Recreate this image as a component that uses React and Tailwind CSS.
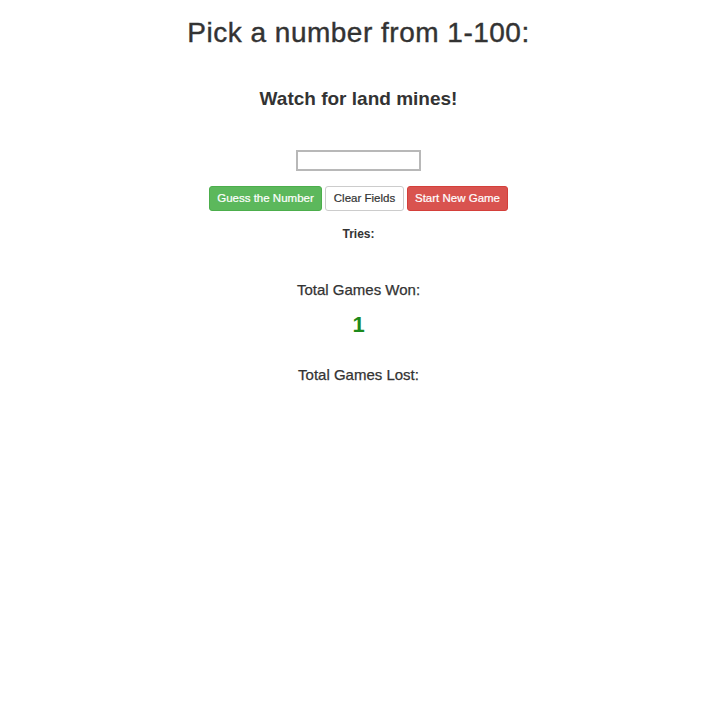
import React, { useState } from "react";

const App = () => {
  const [guess, setGuess] = useState("");

  return (
    <div className="min-h-[720px] bg-white text-[#333] font-['Liberation_Sans',Arial,sans-serif]">
      <div className="flex flex-col items-center pt-[16px] pr-[3px]">
        <h1 className="text-[28px] leading-[34px] tracking-[0.5px] font-medium [-webkit-text-stroke:0.4px_#333]">
          Pick a number from 1-100:
        </h1>
        <h3 className="mt-[37px] text-[19px] leading-[24px] font-bold">
          Watch for land mines!
        </h3>
        <input
          type="text"
          value={guess}
          onChange={(e) => setGuess(e.target.value)}
          className="mt-[39px] w-[125px] h-[21px] border-2 border-[#b8b8b8] bg-white outline-none text-[13px] px-1"
        />
        <div className="mt-[15px] flex gap-[3px]">
          <button className="h-[25px] w-[113px] rounded-[3px] bg-[#5cb85c] border border-[#4cae4c] text-white text-[11.5px] [-webkit-text-stroke:0.2px_#fff]">
            Guess the Number
          </button>
          <button className="h-[25px] w-[79px] rounded-[3px] bg-white border border-[#ccc] text-[#333] text-[11.5px] [-webkit-text-stroke:0.2px_#333]">
            Clear Fields
          </button>
          <button className="h-[25px] w-[101px] rounded-[3px] bg-[#d9534f] border border-[#d43f3a] text-white text-[11.5px] [-webkit-text-stroke:0.2px_#fff]">
            Start New Game
          </button>
        </div>
        <p className="mt-[16px] text-[12px] leading-[14px] font-bold">Tries:</p>
        <p className="mt-[40px] text-[15px] leading-[18px] [-webkit-text-stroke:0.25px_#333]">
          Total Games Won:
        </p>
        <p className="mt-[14px] text-[22px] leading-[24px] font-bold text-[#1c8a1c]">
          1
        </p>
        <p className="mt-[29px] text-[15px] leading-[18px] [-webkit-text-stroke:0.25px_#333]">
          Total Games Lost:
        </p>
      </div>
    </div>
  );
};

export default App;
